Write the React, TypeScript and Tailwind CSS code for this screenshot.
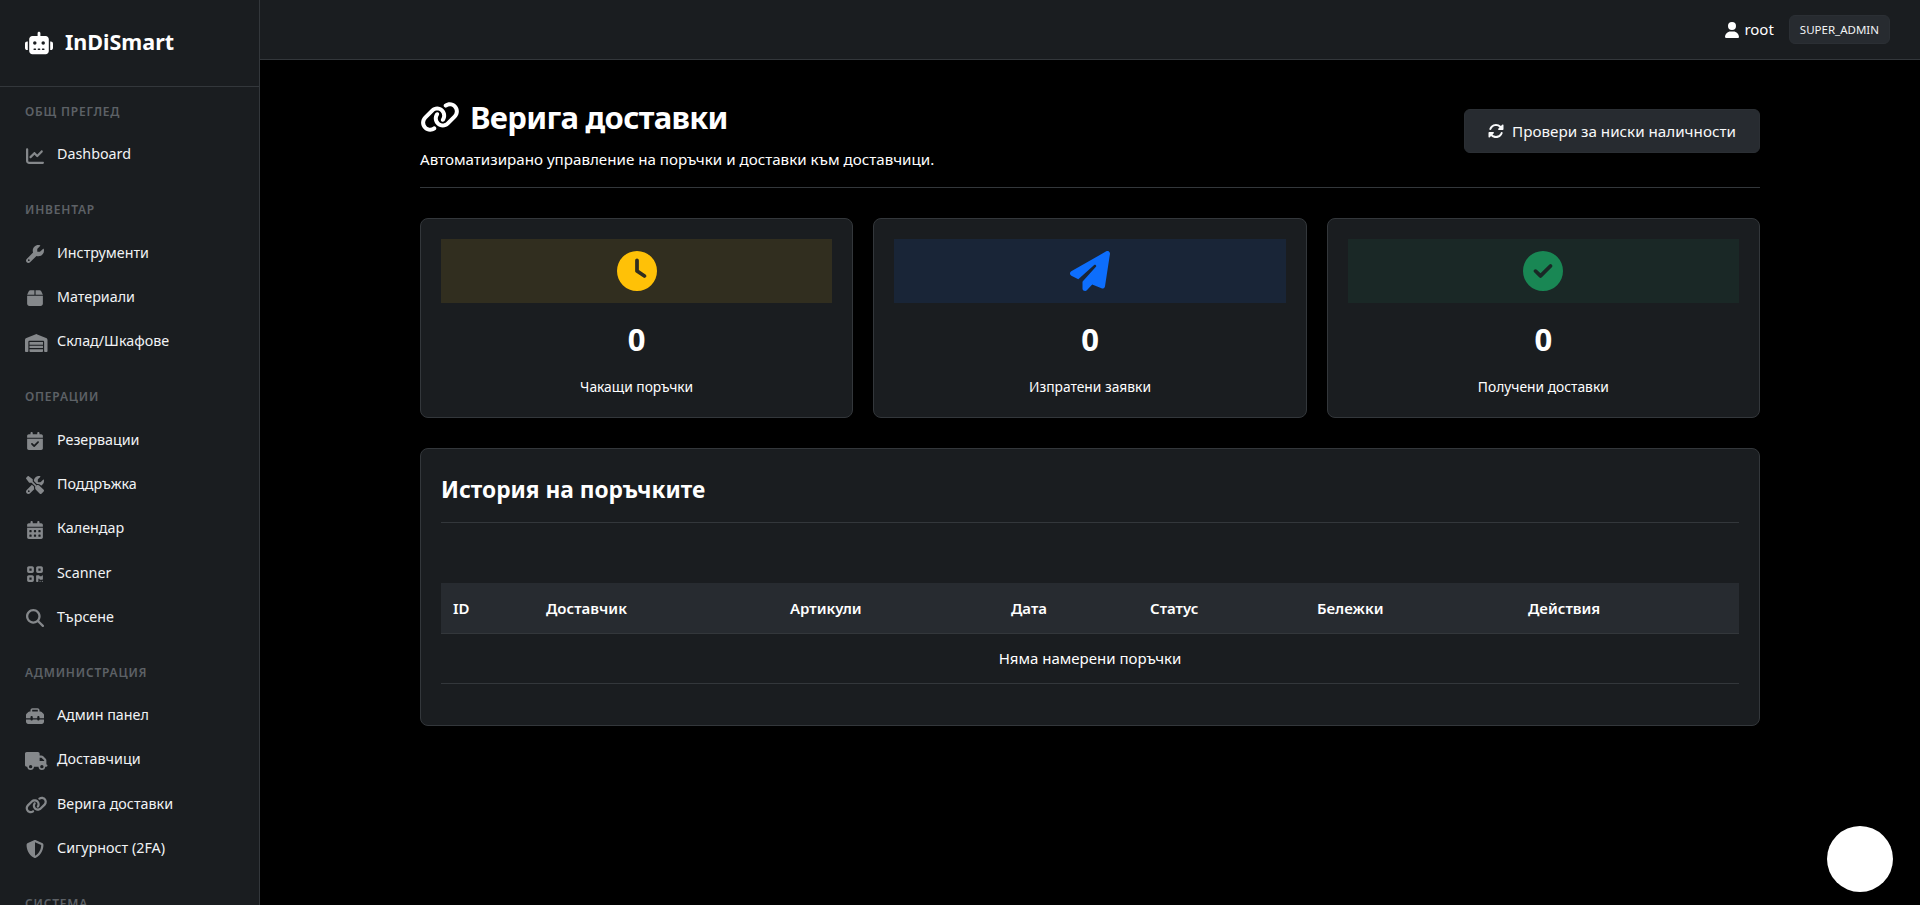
import type { ReactNode } from 'react';
import {
  FaBox,
  FaCalendarCheck,
  FaCalendarDays,
  FaChartLine,
  FaCircleCheck,
  FaClock,
  FaLink,
  FaMagnifyingGlass,
  FaPaperPlane,
  FaQrcode,
  FaRobot,
  FaRotate,
  FaScrewdriverWrench,
  FaShieldHalved,
  FaToolbox,
  FaTruck,
  FaUser,
  FaWarehouse,
  FaWrench,
} from 'react-icons/fa6';

// 640-wide glyphs need their real width, otherwise they shrink into the 1em box
const wide = 'w-[22.5px] h-[18px]';

const navGroups: { label: string; items: { name: string; icon: ReactNode }[] }[] = [
  { label: 'Общ преглед', items: [{ name: 'Dashboard', icon: <FaChartLine /> }] },
  {
    label: 'Инвентар',
    items: [
      { name: 'Инструменти', icon: <FaWrench /> },
      { name: 'Материали', icon: <FaBox /> },
      { name: 'Склад/Шкафове', icon: <FaWarehouse className={wide} /> },
    ],
  },
  {
    label: 'Операции',
    items: [
      { name: 'Резервации', icon: <FaCalendarCheck /> },
      { name: 'Поддръжка', icon: <FaScrewdriverWrench /> },
      { name: 'Календар', icon: <FaCalendarDays /> },
      { name: 'Scanner', icon: <FaQrcode /> },
      { name: 'Търсене', icon: <FaMagnifyingGlass /> },
    ],
  },
  {
    label: 'Администрация',
    items: [
      { name: 'Админ панел', icon: <FaToolbox /> },
      { name: 'Доставчици', icon: <FaTruck className={wide} /> },
      { name: 'Верига доставки', icon: <FaLink className={wide} /> },
      { name: 'Сигурност (2FA)', icon: <FaShieldHalved /> },
    ],
  },
  { label: 'Система', items: [] },
];

const stats = [
  { label: 'Чакащи поръчки', tint: 'bg-[#312e1f]', icon: <FaClock className="text-[#ffc107]" /> },
  { label: 'Изпратени заявки', tint: 'bg-[#192537]', icon: <FaPaperPlane className="text-[#0d6efd]" /> },
  { label: 'Получени доставки', tint: 'bg-[#1a2826]', icon: <FaCircleCheck className="text-[#198754]" /> },
];

const columns = [
  { name: 'ID', width: 'w-[93px]' },
  { name: 'Доставчик', width: 'w-[244px]' },
  { name: 'Артикули', width: 'w-[221px]' },
  { name: 'Дата', width: 'w-[139px]' },
  { name: 'Статус', width: 'w-[167px]' },
  { name: 'Бележки', width: 'w-[211px]' },
  { name: 'Действия', width: 'w-[223px]' },
];

function Sidebar() {
  return (
    <aside className="w-[260px] shrink-0 h-full overflow-hidden bg-[#1a1d20] border-r border-[#33373b]">
      {/* Logo */}
      <div className="h-[87px] flex items-center pl-[25px] pb-[1px] border-b border-[#33373b]">
        <FaRobot className="text-[28px] text-white mr-3" />
        <span className="text-[21.5px] font-bold text-white">InDiSmart</span>
      </div>

      <nav className="pt-[15px] flex flex-col gap-6">
        {navGroups.map((group) => (
          <div key={group.label}>
            <div className="h-5 mb-[10px] pl-[25px] flex items-center text-[12px] font-semibold uppercase tracking-[0.8px] text-[#5d6166]">
              {group.label}
            </div>
            {group.items.map((item) => (
              <a key={item.name} className="h-[44.3px] pl-[25px] flex items-center text-[14.3px] text-[#f1f3f5]">
                <span className="w-5 mr-3 shrink-0 text-center text-[18px] text-[#85888b]">
                  <span className="inline-block align-middle">{item.icon}</span>
                </span>
                {item.name}
              </a>
            ))}
          </div>
        ))}
      </nav>
    </aside>
  );
}

function Topbar() {
  return (
    <header className="h-[60px] shrink-0 flex items-center justify-end pr-[30px] bg-[#1a1d20] border-b border-[#33373b]">
      <div className="flex items-center text-white text-[15px] mr-[15px]">
        <FaUser className="text-[16px] mr-[4px]" />
        root
      </div>
      <div className="h-[29px] px-[10px] flex items-center rounded-md bg-[#272b30] text-[11.5px] text-[#f1f3f5] border border-[#2b2f34]">
        SUPER_ADMIN
      </div>
    </header>
  );
}

export default function App() {
  return (
    <div className="h-screen flex overflow-hidden bg-black text-white font-['Noto_Sans',sans-serif]">
      <Sidebar />

      <div className="flex-1 min-w-0 flex flex-col">
        <Topbar />

        <main className="w-[1340px] mx-auto pt-[36px]">
          {/* Page header */}
          <div className="flex items-center justify-between pb-[16px] border-b border-[#33373b]">
            <div>
              <h1 className="flex items-center text-[31px] leading-[42px] font-bold tracking-[-0.7px] mb-[9px]">
                <FaLink className="w-10 h-8 mr-[10px]" />
                Верига доставки
              </h1>
              <p className="text-[15.15px] leading-[24px]">Автоматизирано управление на поръчки и доставки към доставчици.</p>
            </div>
            <button
              type="button"
              className="w-[296px] h-[44px] mb-[5px] flex items-center justify-center rounded-md bg-[#272b30] border border-[#2b2f34] text-[15.2px] text-[#f8f9fa]"
            >
              <FaRotate className="text-[16px] mr-2" />
              Провери за ниски наличности
            </button>
          </div>

          {/* Stat cards */}
          <div className="grid grid-cols-3 gap-5 mt-[30px]">
            {stats.map((stat) => (
              <div key={stat.label} className="h-[200px] p-5 rounded-lg bg-[#1a1d20] border border-[#33373b] text-center">
                <div className={`h-16 flex items-center justify-center text-[40px] ${stat.tint}`}>{stat.icon}</div>
                <div className="mt-[16px] text-[31px] leading-[40px] font-bold">0</div>
                <div className="mt-[18px] text-[13.8px] leading-[20px]">{stat.label}</div>
              </div>
            ))}
          </div>

          {/* Orders table */}
          <section className="mt-[30px] h-[278px] px-5 rounded-lg bg-[#1a1d20] border border-[#33373b]">
            <h2 className="h-[74px] pt-[9px] flex items-center text-[22.7px] font-bold border-b border-[#33373b]">История на поръчките</h2>
            <table className="mt-[60px] w-full table-fixed text-[15px]">
              <thead>
                <tr className="h-[50px] bg-[#272b30] border-b border-[#33373b]">
                  {columns.map((col) => (
                    <th key={col.name} className={`${col.width} px-3 text-left font-semibold`}>
                      {col.name}
                    </th>
                  ))}
                </tr>
              </thead>
              <tbody>
                <tr className="h-[50px] border-b border-[#33373b]">
                  <td colSpan={7} className="text-center">Няма намерени поръчки</td>
                </tr>
              </tbody>
            </table>
          </section>
        </main>
      </div>

      {/* Floating chat button */}
      <div className="fixed right-[27px] bottom-[13px] w-[66px] h-[66px] rounded-full bg-white" />
    </div>
  );
}
